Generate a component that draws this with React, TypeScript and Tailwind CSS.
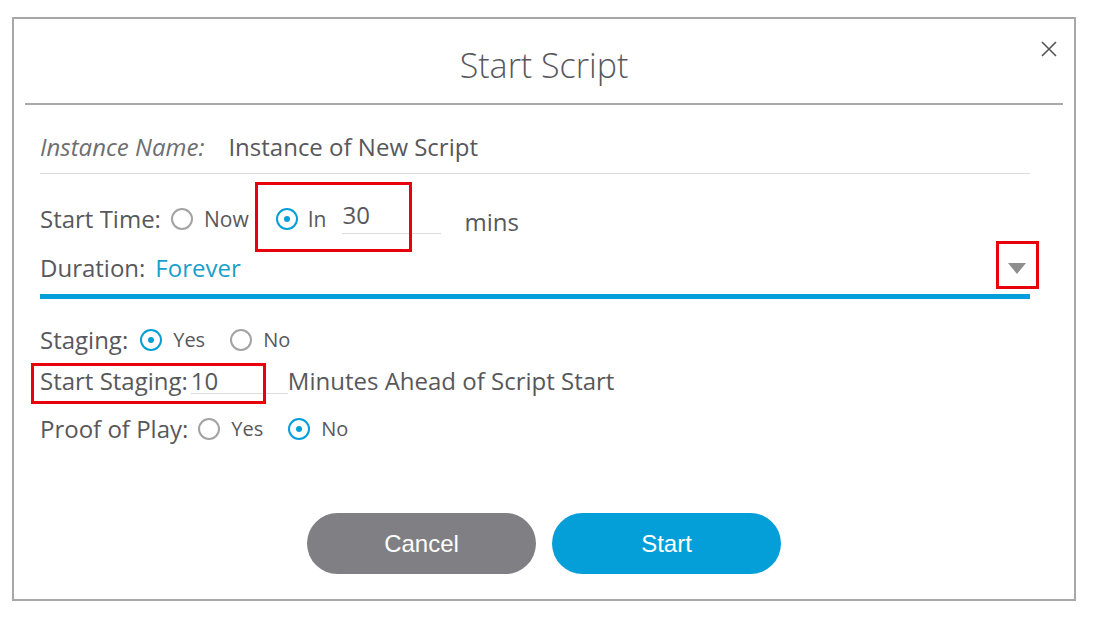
import React from "react";

function Radio({ checked }: { checked?: boolean }) {
  return checked ? (
    <span className="block w-[22px] h-[22px] rounded-full border-2 border-[#049fd9] flex items-center justify-center shrink-0">
      <span className="block w-[6px] h-[6px] rounded-full bg-[#049fd9]" />
    </span>
  ) : (
    <span className="block w-[22px] h-[22px] rounded-full border-2 border-[#a3a3a3] shrink-0" />
  );
}

export default function App() {
  return (
    <div className="w-[1094px] h-[619px] bg-white pt-[17px] pl-[12px] text-[#58585b] font-['Open_Sans',sans-serif]">
      <div className="relative w-[1064px] h-[584px] border-2 border-[#a8a8a8]">
        {/* Header */}
        <div className="h-[84px] flex items-center justify-center pt-[7px]">
          <h1 className="text-[34px] font-light text-[#58585b] leading-none">Start Script</h1>
        </div>
        <button className="absolute right-[16px] top-[21px] text-[#555]">
          <svg width="18" height="18" viewBox="0 0 18 18" fill="none" stroke="currentColor" strokeWidth="1.6">
            <path d="M2 2 L16 16 M16 2 L2 16" />
          </svg>
        </button>
        <div className="mx-[11px] h-[2px] bg-[#a9a9a9]" />

        {/* Form */}
        <div className="pl-[26px] pr-[44px]">
          <div className="h-[69px] flex items-end pb-[13px] border-b border-[#dcdcdc] text-[24px] leading-[26px]">
            <span className="italic text-[#6e6e70]">Instance Name:</span>
            <span className="ml-[24px]">Instance of New Script</span>
          </div>

          <div className="mt-[32px] h-[26px] flex items-center text-[24px] leading-[26px]">
            <span>Start Time:</span>
            <span className="ml-[10px]"><Radio /></span>
            <span className="ml-[11px] text-[21px]">Now</span>
            <span className="ml-[27px]"><Radio checked /></span>
            <span className="ml-[10px] text-[21px]">In</span>
            <span className="ml-[16px] w-[99px] h-[30px] border-b border-[#dcdcdc] leading-[22px]">30</span>
            <span className="ml-[23px] mt-[6px]">mins</span>
          </div>

          <div className="mt-[23px] h-[26px] flex items-center text-[24px] leading-[26px]">
            <span>Duration:</span>
            <span className="ml-[10px] text-[#1a9fcb]">Forever</span>
            <svg className="ml-auto mr-[4px]" width="18" height="11" viewBox="0 0 18 11">
              <path d="M0 0 H18 L9 11 Z" fill="#8e8e8e" />
            </svg>
          </div>
          <div className="mt-[13px] h-[5px] bg-[#049fd9]" />

          <div className="mt-[28px] h-[26px] flex items-center text-[24px] leading-[26px]">
            <span>Staging:</span>
            <span className="ml-[12px]"><Radio checked /></span>
            <span className="ml-[11px] text-[20px]">Yes</span>
            <span className="ml-[25px]"><Radio /></span>
            <span className="ml-[11px] text-[20px]">No</span>
          </div>

          <div className="mt-[15px] h-[26px] flex items-center text-[24px] leading-[26px]">
            <span>Start Staging:</span>
            <span className="ml-[3px] w-[97px] h-[26px] border-b border-[#dcdcdc]">10</span>
            <span>Minutes Ahead of Script Start</span>
          </div>

          <div className="mt-[22px] h-[26px] flex items-center text-[24px] leading-[26px]">
            <span>Proof of Play:</span>
            <span className="ml-[10px]"><Radio /></span>
            <span className="ml-[11px] text-[20px]">Yes</span>
            <span className="ml-[25px]"><Radio checked /></span>
            <span className="ml-[11px] text-[20px]">No</span>
          </div>
        </div>

        {/* Buttons */}
        <div className="mt-[71px] flex justify-center gap-[16px] font-['Liberation_Sans',sans-serif]">
          <button className="w-[229px] h-[61px] rounded-full bg-[#7f7f84] text-white text-[24px]">Cancel</button>
          <button className="w-[229px] h-[61px] rounded-full bg-[#049fd9] text-white text-[24px]">Start</button>
        </div>

        {/* Annotation boxes */}
        <div className="absolute left-[241px] top-[163px] w-[157px] h-[70px] border-[3px] border-[#e8000b]" />
        <div className="absolute left-[982px] top-[222px] w-[43px] h-[48px] border-[3px] border-[#e8000b]" />
        <div className="absolute left-[17px] top-[344px] w-[235px] h-[41px] border-[3px] border-[#e8000b]" />
      </div>
    </div>
  );
}
